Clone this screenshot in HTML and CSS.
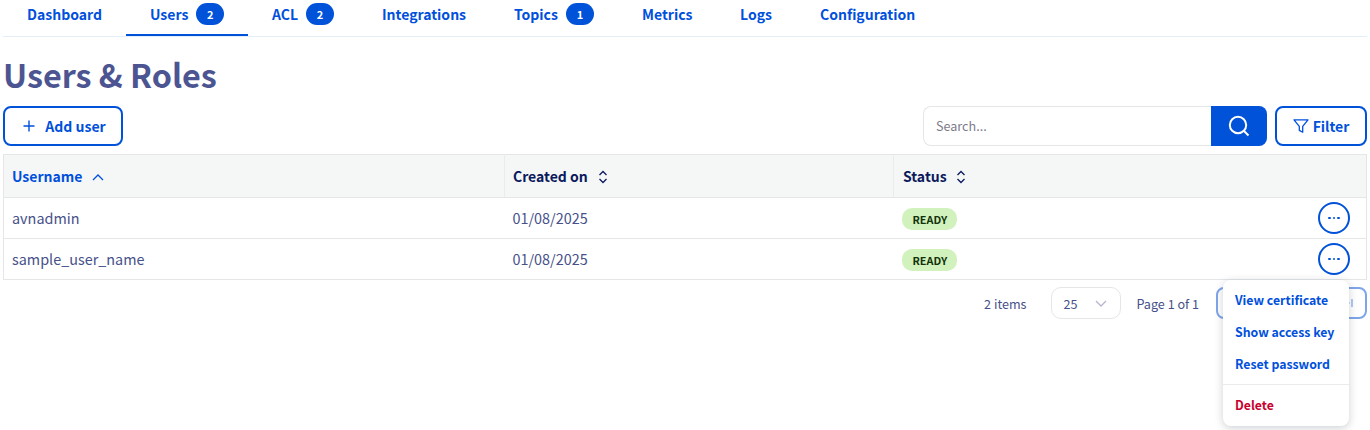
FILE: index.html
```html
<!DOCTYPE html>
<html lang="en">
<head>
<meta charset="utf-8">
<title>Users &amp; Roles</title>
<link rel="stylesheet" href="styles.css">
</head>
<body>
<div class="page">
  <nav class="tabs">
    <a class="tab tab-dashboard">Dashboard</a>
    <a class="tab tab-active tab-users">Users <span class="count">2</span></a>
    <a class="tab tab-acl">ACL <span class="count">2</span></a>
    <a class="tab tab-integrations">Integrations</a>
    <a class="tab tab-topics">Topics <span class="count">1</span></a>
    <a class="tab tab-metrics">Metrics</a>
    <a class="tab tab-logs">Logs</a>
    <a class="tab">Configuration</a>
  </nav>
  <h1 class="title">Users &amp; Roles</h1>
  <div class="toolbar">
    <button class="btn btn-add">
      <svg class="ic-plus" viewBox="0 0 12 12" width="12" height="12"><path d="M6 .5v11M.5 6h11" fill="none" stroke="currentColor" stroke-width="1.4"/></svg>
      Add user
    </button>
    <div class="tools-right">
      <div class="search">
        <input class="search-input" type="text" placeholder="Search...">
        <button class="search-btn" aria-label="Search">
          <svg viewBox="0 0 24 24" width="24" height="24"><circle cx="11" cy="11" r="8.2" fill="none" stroke="#fff" stroke-width="2"/><path d="M17 17l4.5 4.5" stroke="#fff" stroke-width="2" fill="none"/></svg>
        </button>
      </div>
      <button class="btn btn-filter">
        <svg viewBox="0 0 16 16" width="16" height="16"><path d="M1 1.8h14L9.7 8.3v5.9L6.3 12.4V8.3z" fill="none" stroke="currentColor" stroke-width="1.3" stroke-linejoin="round"/></svg>
        Filter
      </button>
    </div>
  </div>
  <div class="table-wrap">
    <table class="table">
      <colgroup><col class="c1"><col class="c2"><col class="c3"></colgroup>
      <thead>
        <tr>
          <th class="sorted">Username
            <svg class="sort sort-up" viewBox="0 0 12 7" width="12" height="7"><path d="M1 6l5-5 5 5" fill="none" stroke="currentColor" stroke-width="1.3"/></svg>
          </th>
          <th class="th-created">Created on
            <svg class="sort" viewBox="0 0 10 14" width="10" height="14"><path d="M1.5 5L5 1.5 8.500 5M1.500 9L5 12.500 8.500 9" fill="none" stroke="currentColor" stroke-width="1.300"/></svg>
          </th>
          <th class="th-status">Status
            <svg class="sort" viewBox="0 0 10 14" width="10" height="14"><path d="M1.5 5L5 1.5 8.500 5M1.500 9L5 12.500 8.500 9" fill="none" stroke="currentColor" stroke-width="1.300"/></svg>
          </th>
        </tr>
      </thead>
      <tbody>
        <tr>
          <td>avnadmin</td>
          <td>01/08/2025</td>
          <td><div class="status-cell"><span class="chip">READY</span><button class="more" aria-label="Actions"><i></i><i></i><i></i></button></div></td>
        </tr>
        <tr>
          <td>sample_user_name</td>
          <td>01/08/2025</td>
          <td><div class="status-cell"><span class="chip">READY</span><button class="more" aria-label="Actions"><i></i><i></i><i></i></button></div></td>
        </tr>
      </tbody>
    </table>
    <div class="menu">
      <a class="menu-item">View certificate</a>
      <a class="menu-item">Show access key</a>
      <a class="menu-item">Reset password</a>
      <hr class="menu-sep">
      <a class="menu-item menu-danger">Delete</a>
    </div>
  </div>
  <div class="pager">
    <span class="pager-items">2 items</span>
    <div class="select">25
      <svg viewBox="0 0 12 7" width="12" height="7"><path d="M1 1l5 5 5-5" fill="none" stroke="currentColor" stroke-width="1.300"/></svg>
    </div>
    <span class="pager-page">Page 1 of 1</span>
    <button class="pager-btn pager-wide" aria-label="Previous"></button>
    <button class="pager-btn" aria-label="Last">
      <svg viewBox="0 0 10 10" width="10" height="10"><path d="M1 1.500L5 5 1 8.500M8 1v8" fill="none" stroke="currentColor" stroke-width="1.200"/></svg>
    </button>
  </div>
</div>
</body>
</html>
```
FILE: styles.css
```css
* { box-sizing: border-box; }
html, body { margin: 0; padding: 0; background: #fff; }
body {
  font-family: "Noto Sans CJK JP", "Liberation Sans", sans-serif;
  color: #465089;
  font-size: 14px;
  height: 430px;
  overflow: hidden;
}
.page { padding: 0 3px; }
.tabs {
  display: flex;
  height: 37px;
  border-bottom: 1px solid #e3f0fa;
}
.tab {
  display: flex;
  align-items: center;
  gap: 8px;
  height: 36px;
  padding: 0 24px 8px;
  color: #0050dc;
  font-weight: 700;
  font-size: 14px;
  line-height: 20px;
  white-space: nowrap;
}
.tab-dashboard { width: 123px; }
.tab-users { width: 122px; }
.tab-acl { width: 110px; }
.tab-integrations { width: 132px; }
.tab-topics { width: 128px; }
.tab-metrics { width: 98px; }
.tab-logs { width: 80px; }
.tab-active { border-bottom: 2px solid #0052d9; padding-bottom: 6px; }
.count {
  display: inline-flex;
  align-items: center;
  justify-content: center;
  width: 28px;
  height: 22px;
  border-radius: 11px;
  background: #0052d9;
  color: #fff;
  font-size: 11px;
  line-height: 22px;
}
.title {
  margin: 0;
  height: 69px;
  padding-top: 15px;
  font-size: 32.300px;
  line-height: 44px;
  font-weight: 700;
  color: #4c5592;
}
.toolbar {
  display: flex;
  justify-content: space-between;
  height: 40px;
}
.tools-right { display: flex; gap: 8px; }
.btn {
  display: inline-flex;
  align-items: center;
  justify-content: center;
  height: 40px;
  border: 2px solid #0052d9;
  border-radius: 8px;
  background: #fff;
  color: #0050dc;
  font: 700 14px/20px "Noto Sans CJK JP", "Liberation Sans", sans-serif;
}
.btn-add { width: 120px; gap: 10px; padding: 0 0 0 3px; }
.btn-filter { width: 92px; gap: 4px; }
.search { display: flex; width: 344px; }
.search-input {
  width: 288px;
  height: 40px;
  padding: 0 12px 2px;
  border: 1px solid #e4e6e8;
  border-right: 0;
  border-radius: 8px 0 0 8px;
  font: 400 12.600px "Noto Sans CJK JP", "Liberation Sans", sans-serif;
  color: #465089;
  outline: none;
}
.search-input::placeholder { color: #7b7b8c; opacity: 1; }
.search-btn {
  display: flex;
  align-items: center;
  justify-content: center;
  width: 56px;
  height: 40px;
  padding: 0;
  border: 0;
  border-radius: 0 8px 8px 0;
  background: #0052d9;
}
.table-wrap { position: relative; margin-top: 8px; }
.table {
  width: 1364px;
  table-layout: fixed;
  border-collapse: collapse;
  border: 1px solid #e4e6e8;
}
.c1 { width: 501px; }
.c2 { width: 389px; }
.table th {
  height: 43px;
  padding: 0 8px;
  text-align: left;
  font-size: 14px;
  line-height: 20px;
  font-weight: 700;
  color: #0b1a5c;
  background: #f5f7f7;
  border-bottom: 1px solid #e4e6e8;
  border-left: 1px solid #e9ebec;
}
.table th:first-child { border-left: 0; }
.table th.sorted { color: #0050dc; }
.table th.th-status { padding-left: 9px; }
.sort { margin-left: 6px; vertical-align: -2px; }
.sort-up { vertical-align: 1px; }
.th-created .sort { margin-left: 7px; }
.table td {
  height: 41px;
  padding: 0 8px;
  font-size: 14.400px;
  line-height: 22px;
  color: #465089;
  border-bottom: 1px solid #e4e6e8;
}
.status-cell {
  display: flex;
  align-items: center;
  justify-content: space-between;
  padding-right: 8px;
}
.chip {
  display: inline-block;
  height: 22px;
  margin-top: 2px;
  padding: 0 10px 0 11px;
  border-radius: 10px;
  background: #d2f2bd;
  color: #12330a;
  font-size: 10.800px;
  line-height: 23px;
  font-weight: 700;
}
.more {
  display: flex;
  align-items: center;
  justify-content: center;
  gap: 2px;
  width: 32px;
  height: 32px;
  padding: 0;
  border: 2px solid #0052d9;
  border-radius: 50%;
  background: #fff;
}
.more i {
  width: 2.500px;
  height: 2.500px;
  border-radius: 50%;
  background: #0052d9;
}
.menu {
  position: absolute;
  z-index: 2;
  top: 126px;
  left: 1220px;
  width: 126px;
  height: 146px;
  padding: 4px 0 0;
  background: #fff;
  border-radius: 8px;
  box-shadow: 0 2px 8px rgba(30, 40, 60, .22);
}
.menu-item {
  display: block;
  height: 32px;
  padding: 0 12px;
  font-size: 12.300px;
  line-height: 32px;
  font-weight: 700;
  color: #0050dc;
  white-space: nowrap;
}
.menu-sep {
  margin: 4px 0;
  border: 0;
  border-top: 1px solid #e9ebec;
}
.menu-danger { color: #c8002d; }
.pager {
  display: flex;
  align-items: center;
  justify-content: flex-end;
  height: 32px;
  margin-top: 7px;
  font-size: 12.600px;
  color: #465089;
}
.pager-items { margin-right: 25px; }
.select {
  display: flex;
  align-items: center;
  justify-content: space-between;
  width: 70px;
  height: 32px;
  padding: 0 13px 0 11px;
  border: 1px solid #e4e6e8;
  border-radius: 10px;
  margin-right: 15px;
  color: #465089;
}
.select svg { color: #b5b5d2; }
.pager-page { margin-right: 17px; }
.pager-btn {
  display: inline-flex;
  align-items: center;
  justify-content: center;
  width: 36px;
  height: 32px;
  padding: 0;
  background: #fff;
  color: #7fa5e9;
  border: 2px solid #7fa5e9;
  border-radius: 8px;
}
.pager-wide { width: 112px; margin-right: 3px; }
```
